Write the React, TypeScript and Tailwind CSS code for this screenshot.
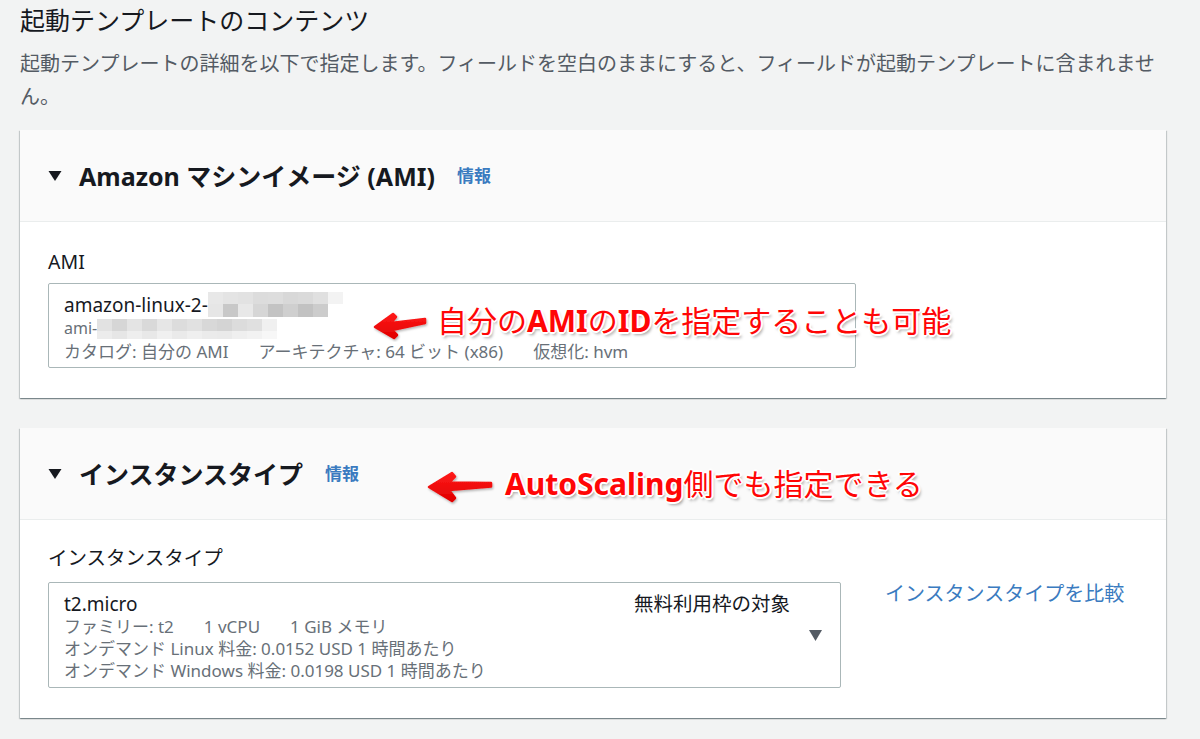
import React from "react";

const FONT = "font-['Noto_Sans','Noto_Sans_CJK_JP',sans-serif]";
const NOTE_SHADOW =
  "[text-shadow:1px_1px_0_#fff,-1px_-1px_0_#fff,1px_-1px_0_#fff,-1px_1px_0_#fff,0_2px_0_#fff,2px_0_0_#fff,-2px_0_0_#fff,0_-2px_0_#fff,2px_3px_3px_rgba(0,0,0,0.35)]";

// pixelated blur blocks: each row is a list of bg classes
const nameBlur = [
  ["bg-[#e8e8e8]", "bg-[#e4e4e4]", "bg-[#e2e2e2]", "bg-[#dcdcdc]", "bg-[#dddddd]", "bg-[#d8d8d8]", "bg-[#dadada]", "bg-[#e0e0e0]", "bg-[#f3f3f3]"],
  ["bg-[#e6e6e6]", "bg-[#c8c8c8]", "bg-[#e8e8e8]", "bg-[#d6d6d6]", "bg-[#c3c3c3]", "bg-[#cfcfcf]", "bg-[#c2c2c2]", "bg-[#cccccc]", "bg-white"],
];
const idBlur = [
  ["bg-[#e2e2e2]", "bg-[#d6d6d6]", "bg-[#e4e4e4]", "bg-[#d9d9d9]", "bg-[#e6e6e6]", "bg-[#dcdcdc]", "bg-[#e1e1e1]", "bg-[#d8d8d8]", "bg-[#d4d4d4]", "bg-[#dcdcdc]", "bg-[#e0e0e0]", "bg-[#f0f0f0]"],
  ["bg-[#ececec]", "bg-[#e6e6e6]", "bg-[#eeeeee]", "bg-[#e8e8e8]", "bg-[#f0f0f0]", "bg-[#eaeaea]", "bg-[#efefef]", "bg-[#ebebeb]", "bg-[#eaeaea]", "bg-[#efefef]", "bg-[#f2f2f2]", "bg-[#f7f7f7]"],
];

function Blur({ rows, heights }: { rows: string[][]; heights: string[] }) {
  return (
    <span className="inline-flex flex-col align-middle">
      {rows.map((row, i) => (
        <span key={i} className="flex">
          {row.map((c, j) => (
            <span key={j} className={`block w-[15px] ${heights[i]} ${c}`} />
          ))}
        </span>
      ))}
    </span>
  );
}

function Caret() {
  return (
    <svg width="14" height="12" viewBox="0 0 14 12" className="shrink-0">
      <path d="M0.5 1 H13.5 L7 11 Z" fill="#16191f" />
    </svg>
  );
}

function RedArrow({ w, h, d, id }: { w: number; h: number; d: string; id: string }) {
  return (
    <svg width={w} height={h} viewBox={`0 0 ${w} ${h}`}>
      <defs>
        <linearGradient id={id} x1="0" y1="0" x2="0" y2="1">
          <stop offset="0" stopColor="#ff1a1a" />
          <stop offset="1" stopColor="#e00000" />
        </linearGradient>
        <filter id={`${id}s`} x="-20%" y="-20%" width="140%" height="150%">
          <feDropShadow dx="1" dy="1.5" stdDeviation="1" floodColor="#000" floodOpacity="0.3" />
        </filter>
      </defs>
      <path
        d={d}
        fill={`url(#${id})`}
        stroke={`url(#${id})`}
        strokeWidth="2.5"
        strokeLinejoin="round"
        filter={`url(#${id}s)`}
      />
    </svg>
  );
}

function Panel({
  title,
  children,
}: {
  title: string;
  children: React.ReactNode;
}) {
  return (
    <section className="w-[1146px] bg-white shadow-[0_1px_1px_0_rgba(0,28,36,0.3),1px_1px_1px_0_rgba(0,28,36,0.15),-1px_1px_1px_0_rgba(0,28,36,0.15)]">
      <div className="flex h-[92px] items-center border-b border-[#eaeded] bg-[#fafafa] pl-[28px]">
        <Caret />
        <h3 className="ml-[17px] text-[25px] font-bold leading-[30px] text-[#16191f]">
          {title}
        </h3>
        <a className="ml-[22px] text-[17px] font-bold text-[#3a7bc0]">情報</a>
      </div>
      <div className="px-[28px] pb-[30px]">{children}</div>
    </section>
  );
}

export default function App() {
  return (
    <div className={`relative min-h-screen bg-[#f2f3f3] px-[20px] pt-[5px] ${FONT}`}>
      <h2 className="text-[25px] leading-[30px] text-[#16191f]">
        起動テンプレートのコンテンツ
      </h2>
      <p className="mt-[12px] w-[1135px] text-[20px] leading-[33px] text-[#545b64]">
        起動テンプレートの詳細を以下で指定します。フィールドを空白のままにすると、フィールドが起動テンプレートに含まれません。
      </p>

      <div className="mt-[17px]">
        <Panel title="Amazon マシンイメージ (AMI)">
          <div className="pt-[28px] text-[19.5px] leading-[24px] text-[#16191f]">AMI</div>
          <div className="mt-[9px] w-[808px] rounded-[2px] border border-[#aab7b8] bg-white pl-[15px] pt-[8px] pb-[3px]">
            <div className="flex items-center text-[19px] leading-[24px] text-[#16191f]">
              <span>amazon-linux-2-</span>
              <Blur rows={nameBlur} heights={["h-[12px]", "h-[13px]"]} />
            </div>
            <div className="flex items-center text-[16px] leading-[23px] text-[#687078]">
              <span>ami-</span>
              <Blur rows={idBlur} heights={["h-[12px]", "h-[8px]"]} />
            </div>
            <div className="flex gap-[30px] text-[17px] leading-[24px] text-[#687078]">
              <span>カタログ: 自分の AMI</span>
              <span>アーキテクチャ: 64 ビット (x86)</span>
              <span>仮想化: hvm</span>
            </div>
          </div>
        </Panel>
      </div>

      <div className="mt-[30px]">
        <Panel title="インスタンスタイプ">
          <div className="pt-[26px] text-[19.5px] leading-[24px] text-[#16191f]">
            インスタンスタイプ
          </div>
          <div className="mt-[12px] flex items-start">
            <div className="flex h-[106px] w-[793px] rounded-[2px] border border-[#aab7b8] bg-white pl-[15px] pt-[9px] pr-[18px]">
              <div className="flex-1">
                <div className="text-[19px] leading-[24px] text-[#16191f]">t2.micro</div>
                <div className="flex gap-[30px] text-[17px] leading-[22px] text-[#687078]">
                  <span>ファミリー: t2</span>
                  <span>1 vCPU</span>
                  <span>1 GiB メモリ</span>
                </div>
                <div className="text-[17px] leading-[22px] text-[#687078]">
                  オンデマンド Linux 料金: 0.0152 USD 1 時間あたり
                </div>
                <div className="text-[17px] leading-[22px] text-[#687078]">
                  オンデマンド Windows 料金: 0.0198 USD 1 時間あたり
                </div>
              </div>
              <div className="flex flex-col items-end">
                <div className="mr-[32px] text-[19.5px] leading-[24px] text-[#16191f]">
                  無料利用枠の対象
                </div>
                <svg width="13" height="11" viewBox="0 0 13 11" className="mt-[14px]">
                  <path d="M0 0 H13 L6.5 11 Z" fill="#545b64" />
                </svg>
              </div>
            </div>
            <a className="ml-[44px] text-[20px] leading-[24px] text-[#3a7bc0]">
              インスタンスタイプを比較
            </a>
          </div>
        </Panel>
      </div>

      {/* annotations */}
      <div className="absolute left-[373px] top-[310px]">
        <RedArrow
          id="a1"
          w={56}
          h={32}
          d="M2 17 L20 4 L23 7 L18 13 L52 9 L52 13 L19 20 L24 25 L21 28 Z"
        />
      </div>
      <div
        className={`absolute left-[437px] top-[301px] text-[30px] font-normal leading-[40px] text-[#ff0606] ${NOTE_SHADOW}`}
      >
        自分の<span className="font-bold">AMI</span>の<span className="font-bold">ID</span>を指定することも可能
      </div>
      <div className="absolute left-[427px] top-[470px]">
        <RedArrow
          id="a2"
          w={68}
          h={36}
          d="M2 17 L25 3 L28 6.5 L22 12.5 L64 13 L64 16.5 L22 20 L28 28 L25 31 Z"
        />
      </div>
      <div
        className={`absolute left-[505px] top-[464px] text-[30px] font-normal leading-[40px] text-[#ff0606] ${NOTE_SHADOW}`}
      >
        <span className="font-bold">AutoScaling</span>側でも指定できる
      </div>
    </div>
  );
}
